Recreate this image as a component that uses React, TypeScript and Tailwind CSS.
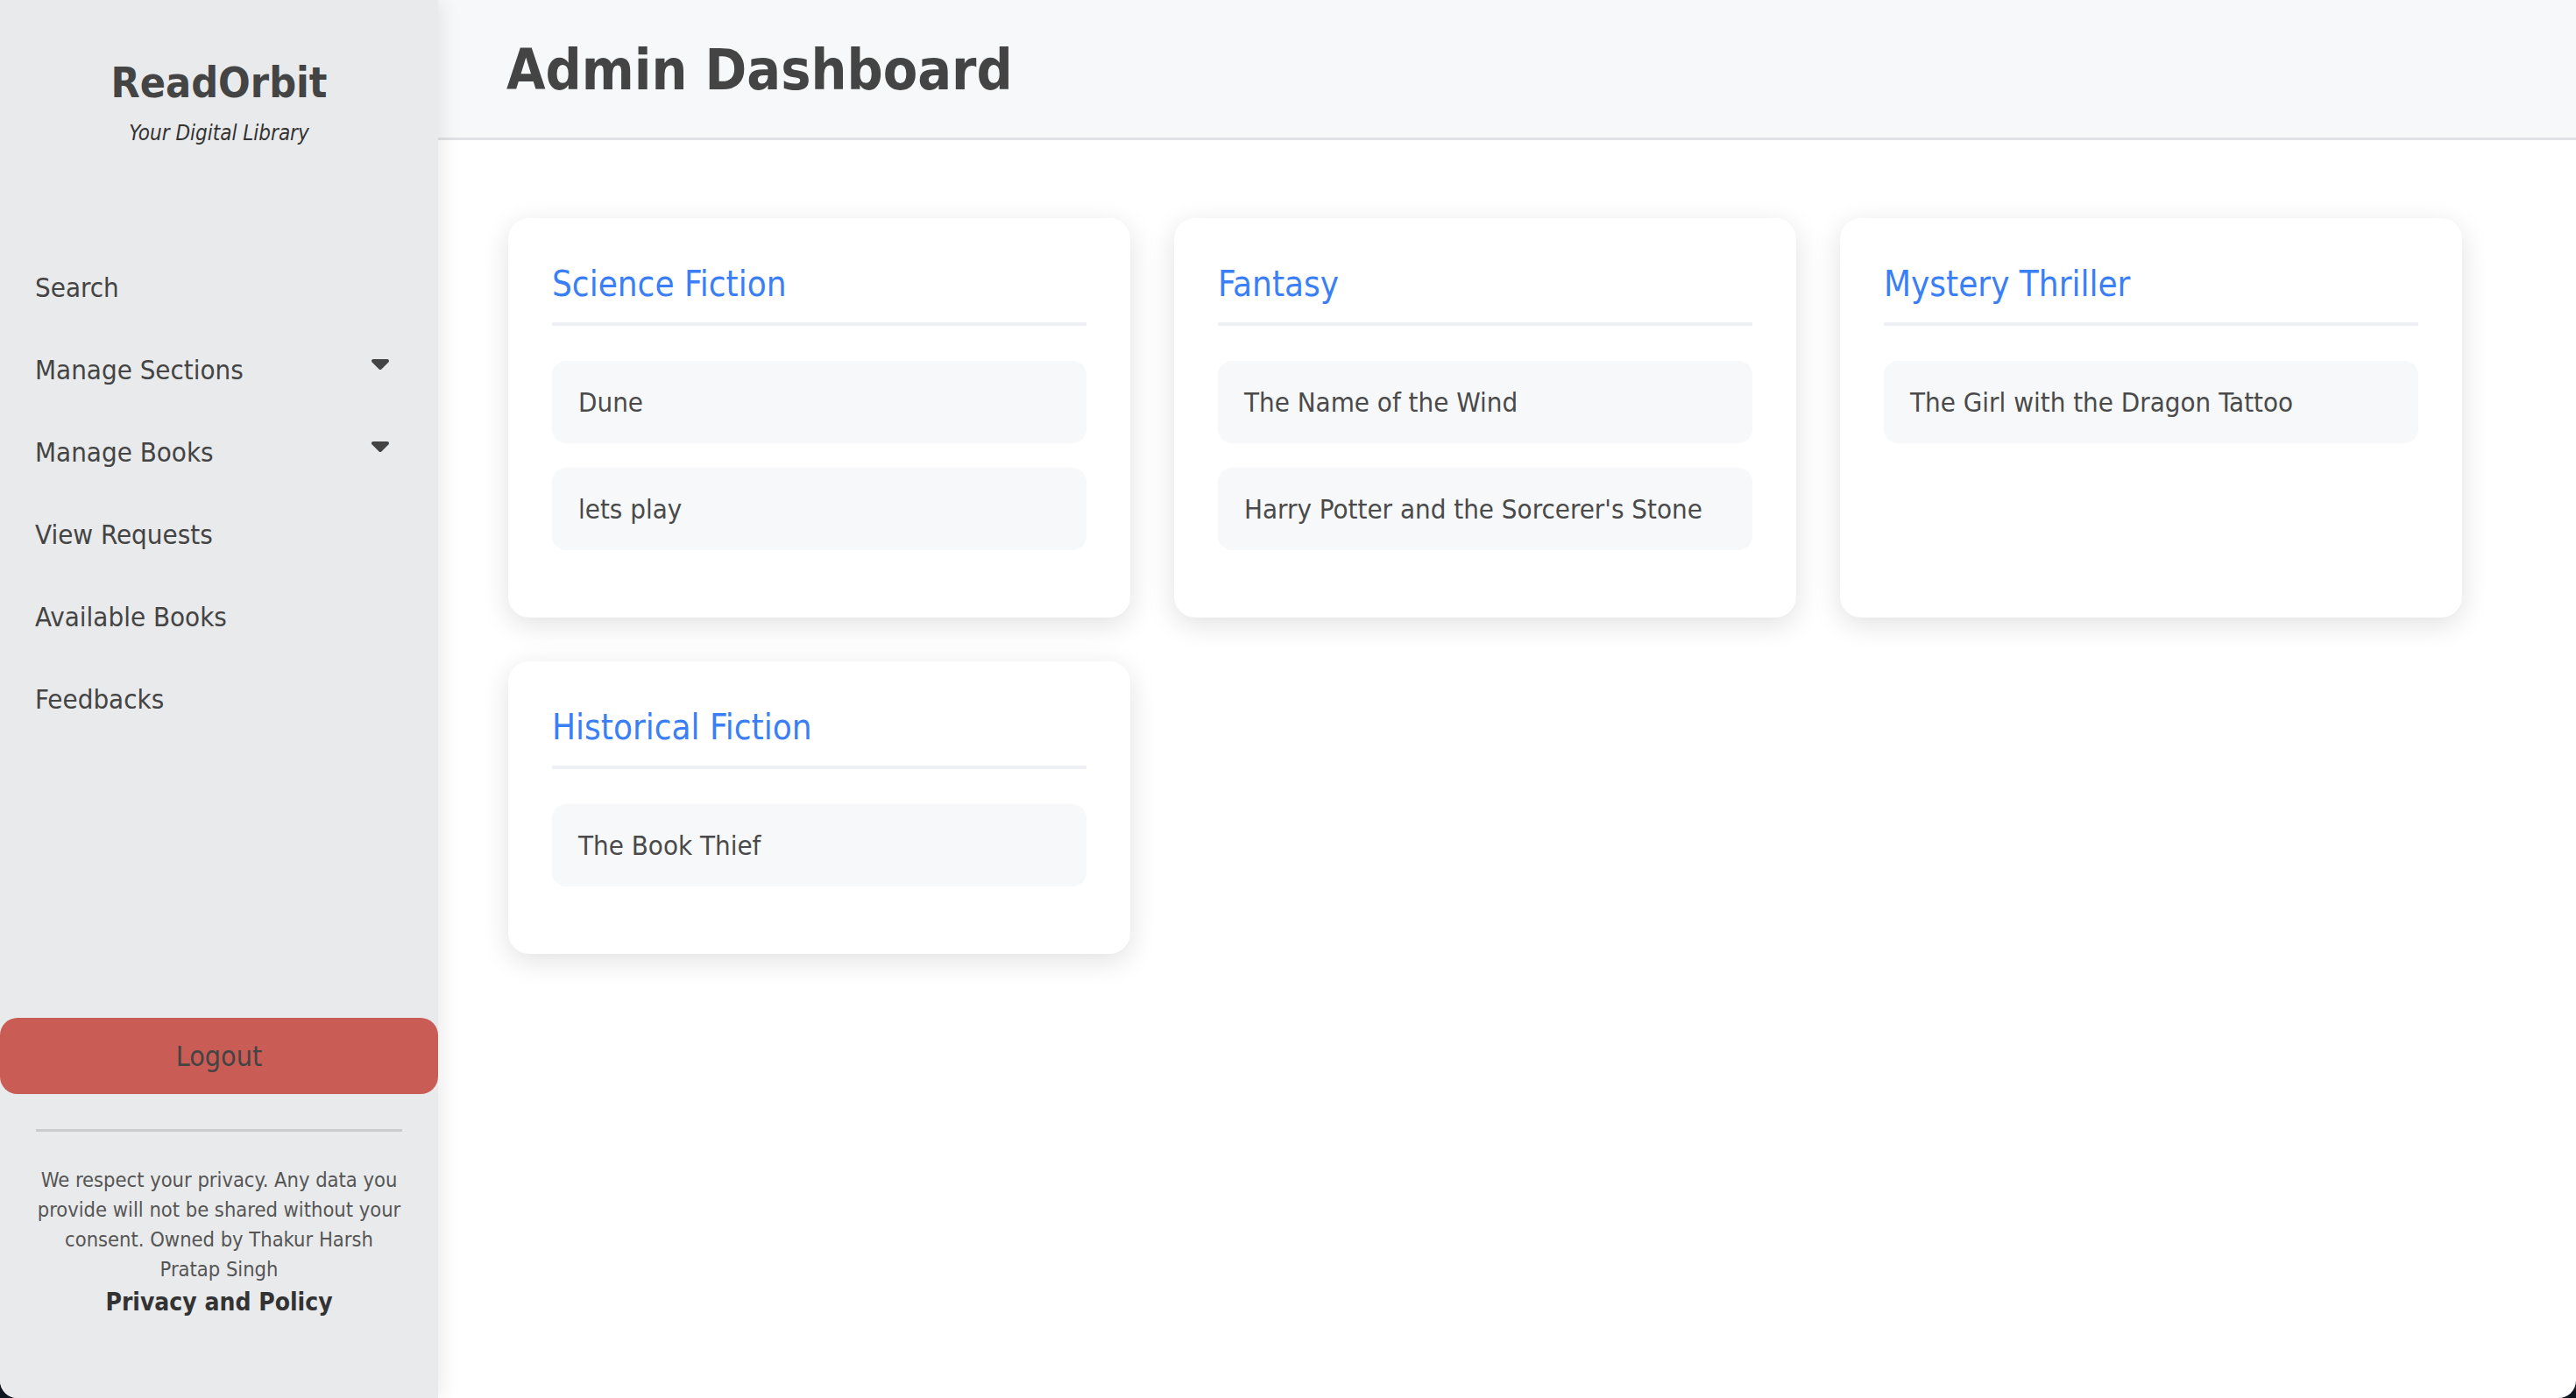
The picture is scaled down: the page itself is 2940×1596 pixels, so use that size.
const sections = [
  { title: 'Science Fiction', books: ['Dune', 'lets play'] },
  { title: 'Fantasy', books: ['The Name of the Wind', "Harry Potter and the Sorcerer's Stone"] },
  { title: 'Mystery Thriller', books: ['The Girl with the Dragon Tattoo'] },
  { title: 'Historical Fiction', books: ['The Book Thief'] },
];

const navItems = [
  { label: 'Search', caret: false },
  { label: 'Manage Sections', caret: true },
  { label: 'Manage Books', caret: true },
  { label: 'View Requests', caret: false },
  { label: 'Available Books', caret: false },
  { label: 'Feedbacks', caret: false },
];

function Caret() {
  return (
    <svg width="22" height="14" viewBox="0 0 22 14" className="mb-[12px]">
      <polygon points="3,3 19,3 11,11" fill="#444" stroke="#444" strokeWidth="4" strokeLinejoin="round" />
    </svg>
  );
}

function Sidebar() {
  return (
    <aside className="relative z-10 flex w-[500px] shrink-0 flex-col bg-[#e9eaeb] shadow-[6px_0_20px_rgba(0,0,0,0.07)]">
      <div className="flex flex-col items-center pt-[66px]">
        <h1 className="text-[48px] font-bold leading-[56px] text-[#444]">ReadOrbit</h1>
        <p className="mt-[14px] text-[24px] italic leading-[32px] text-[#333]">Your Digital Library</p>
      </div>

      <ul className="mt-[113px] flex flex-col">
        {navItems.map((item) => (
          <li key={item.label} className="flex h-[94px] items-center justify-between pl-[40px] pr-[55px]">
            <span className="text-[31px] text-[#444]">{item.label}</span>
            {item.caret && <Caret />}
          </li>
        ))}
      </ul>

      <button className="mt-[317px] flex h-[87px] w-full items-center justify-center rounded-[20px] bg-[#c95c55] text-[32px] text-[#444]">
        Logout
      </button>

      <div className="mx-[41px] mt-[40px] border-t-[3px] border-[#cbcccd]" />

      <div className="mt-[38px] px-[40px] text-center">
        <p className="text-[23.5px] leading-[34px] text-[#555]">
          We respect your privacy. Any data you provide will not be shared without your consent. Owned by Thakur Harsh
          Pratap Singh
        </p>
        <p className="mt-[2px] text-[28px] font-bold leading-[38px] text-[#333]">Privacy and Policy</p>
      </div>
    </aside>
  );
}

function SectionCard({ title, books }: { title: string; books: string[] }) {
  return (
    <div className="rounded-[24px] bg-white px-[50px] pb-[77px] pt-[50px] shadow-[0_8px_32px_rgba(0,0,0,0.12)]">
      <h2 className="border-b-[4px] border-[#eff0f3] pb-[19px] text-[40px] leading-[50px] text-[#3b7ff6]">{title}</h2>
      <ul className="mt-[40px] flex flex-col gap-[28px]">
        {books.map((book) => (
          <li key={book} className="flex h-[94px] items-center rounded-[16px] bg-[#f7f8fa] px-[30px] text-[31px] text-[#4a4a4a]">
            {book}
          </li>
        ))}
      </ul>
    </div>
  );
}

export default function App() {
  return (
    <div className="h-[1596px] w-[2940px] bg-[#0d1520] font-['DejaVu_Sans_Condensed','DejaVu_Sans',sans-serif]">
      <div className="flex h-full overflow-hidden rounded-b-[20px] bg-white">
        <Sidebar />
        <main className="flex flex-1 flex-col">
          <header className="flex h-[160px] items-center border-b-[3px] border-[#dfe1e4] bg-[#f7f8f9] px-[78px] pt-[2px]">
            <h1 className="text-[64px] font-bold text-[#444]">Admin Dashboard</h1>
          </header>
          <div className="grid grid-cols-[repeat(3,710px)] items-start gap-[50px] pl-[80px] pt-[89px]">
            {sections.map((s, i) => (
              <div key={s.title} className={i < 3 ? 'self-stretch grid' : ''}>
                <SectionCard title={s.title} books={s.books} />
              </div>
            ))}
          </div>
        </main>
      </div>
    </div>
  );
}
